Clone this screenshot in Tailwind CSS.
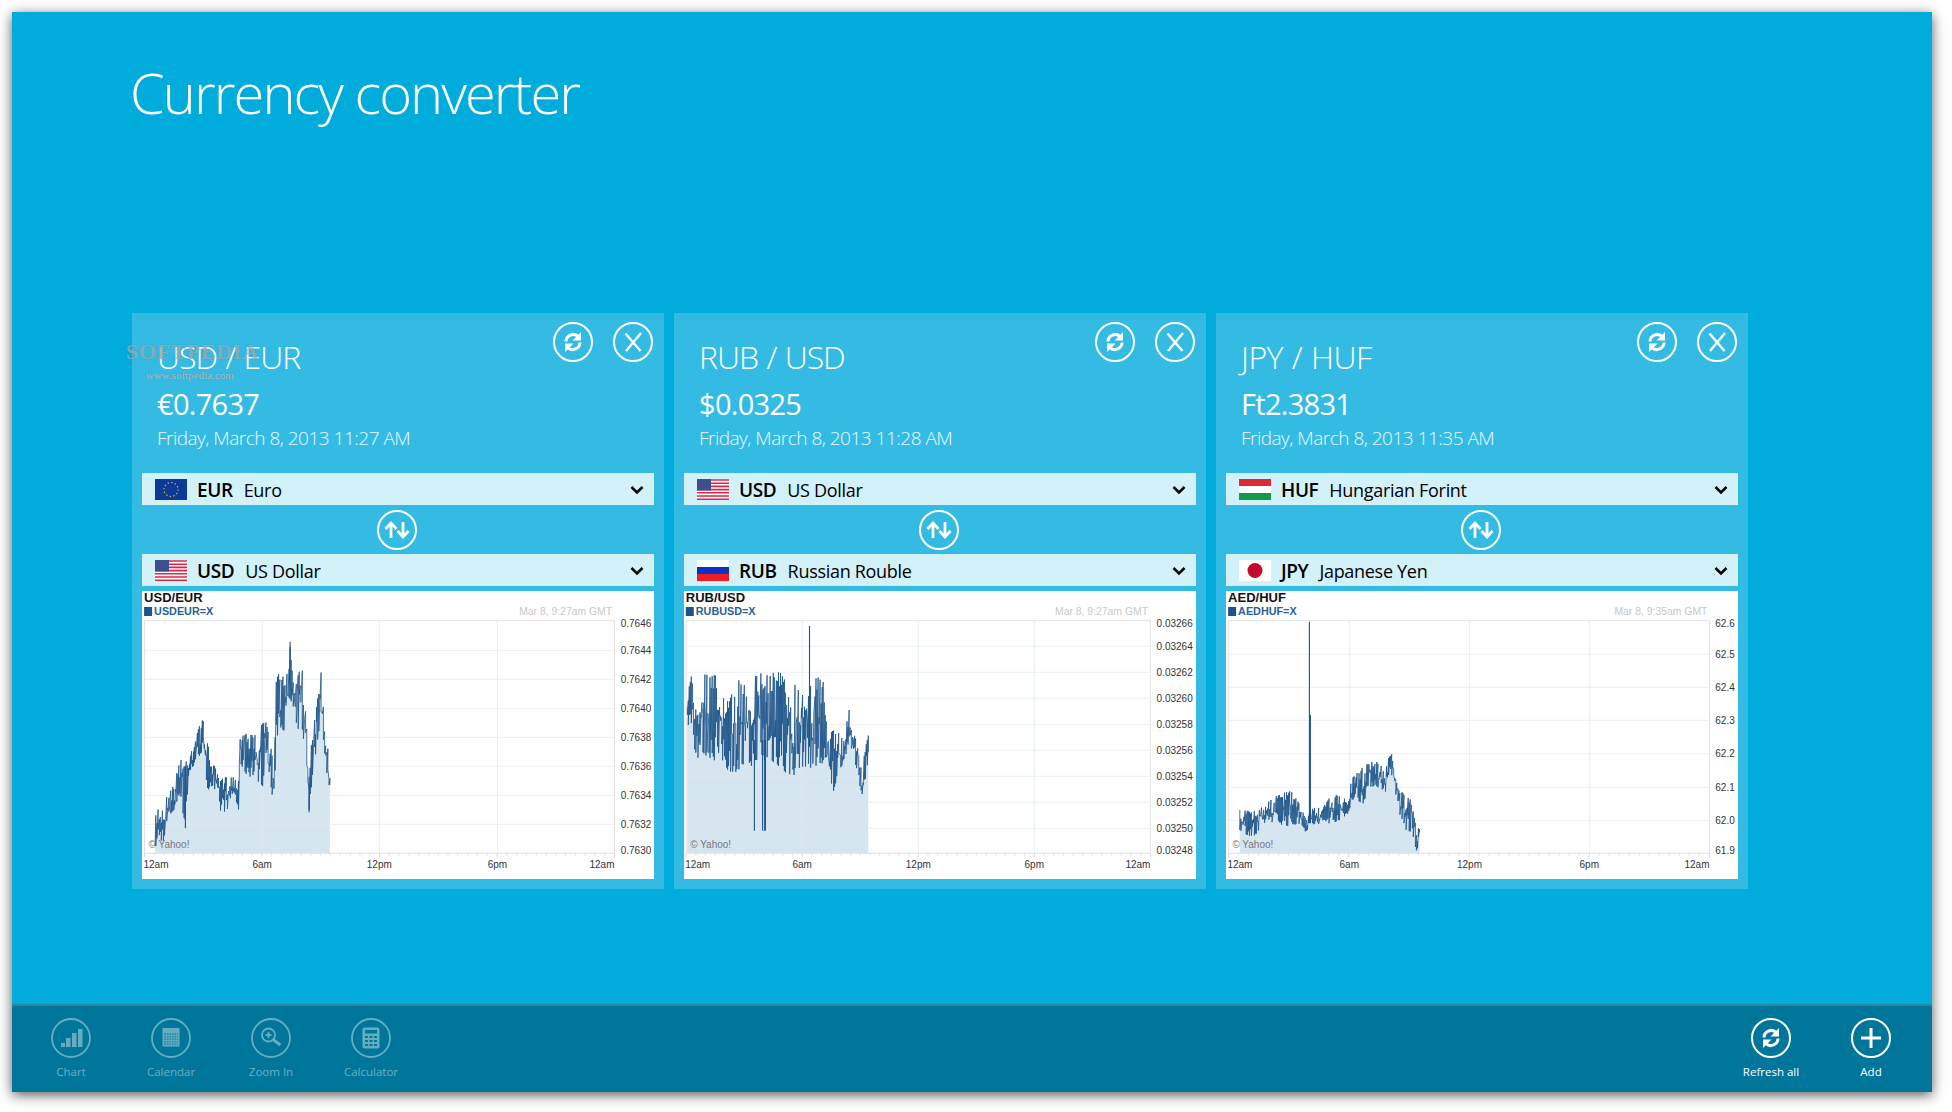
<!DOCTYPE html>
<html lang="en">
<head>
  <meta charset="UTF-8">
  <title>Currency converter</title>
  <script src="https://cdn.jsdelivr.net/npm/@tailwindcss/browser@4"></script>
</head>
<body class="bg-white font-['Open_Sans',sans-serif] text-white">
  <!-- shared icons and flags -->
  <svg class="hidden">
    <symbol id="i-refresh" viewBox="0 0 40 40">
      <path d="M13 19.500a7.200 7.200 0 0 1 12.200-5M27 20.500a7.200 7.200 0 0 1-12.200 5" fill="none" stroke="currentColor" stroke-width="3"/>
      <path d="M28 10v8.500h-8.500zM12 30v-8.500h8.500z" fill="currentColor"/>
    </symbol>
    <symbol id="i-close" viewBox="0 0 40 40">
      <path d="M12.500 11.500 27.500 29M28 11 13 29" fill="none" stroke="currentColor" stroke-width="2.400"/>
    </symbol>
    <symbol id="i-swap" viewBox="0 0 40 40">
      <path d="M14 28V14M8.500 19l5.500-6 5.500 6M26 12v14M20.500 21l5.500 6 5.500-6" fill="none" stroke="currentColor" stroke-width="2.800"/>
    </symbol>
    <symbol id="i-chevron" viewBox="0 0 14 10">
      <path d="M1.500 2 7 7.500 12.500 2" fill="none" stroke="currentColor" stroke-width="2.500"/>
    </symbol>
    <symbol id="f-eu" viewBox="0 0 32 21">
      <rect width="32" height="21" fill="#0c3a96"/>
      <circle cx="16" cy="10.500" r="7" fill="none" stroke="#e8c93a" stroke-width="1.200" stroke-dasharray="1.200 2.470"/>
    </symbol>
    <symbol id="f-us" viewBox="0 0 32 21">
      <rect width="32" height="21" fill="#fff"/>
      <path d="M0 1h32M0 4.200h32M0 7.400h32M0 10.600h32M0 13.800h32M0 17h32M0 20.200h32" stroke="#d8274a" stroke-width="1.600"/>
      <rect width="14" height="11.500" fill="#3d4f8c"/>
    </symbol>
    <symbol id="f-ru" viewBox="0 0 32 21">
      <rect width="32" height="7" fill="#fff"/>
      <rect y="7" width="32" height="7" fill="#0b2fc4"/>
      <rect y="14" width="32" height="7" fill="#ee1c25"/>
    </symbol>
    <symbol id="f-hu" viewBox="0 0 32 21">
      <rect width="32" height="7" fill="#dc2a36"/>
      <rect y="7" width="32" height="7" fill="#fff"/>
      <rect y="14" width="32" height="7" fill="#129a4c"/>
    </symbol>
    <symbol id="f-jp" viewBox="0 0 32 21">
      <rect width="32" height="21" fill="#fff"/>
      <circle cx="16" cy="10.500" r="7.500" fill="#c4092f"/>
    </symbol>
  </svg>

  <div class="w-[1952px] h-[1112px] p-3 overflow-hidden">
    <div class="relative w-[1920px] h-[1080px] bg-[#00acdc] flex flex-col shadow-[0_3px_12px_rgba(0,0,0,0.65)]">
      <header class="h-[301px] pl-[118px] pt-[45px]">
        <h1 class="text-[56px] leading-[70px] font-light tracking-[-1.95px]">Currency converter</h1>
      </header>

      <main class="flex gap-[10px] pl-[120px]">
        <!-- USD / EUR -->
        <section class="w-[532px] h-[576px] bg-[#33bbe3] p-[10px]">
          <div class="h-[150px] flex justify-between">
            <div class="pl-[15px] pt-[14px]">
              <h2 class="text-[32px] leading-[40px] font-light tracking-[-1px] [word-spacing:1px]">USD / EUR</h2>
              <p class="mt-[9px] text-[29px] leading-[36px] tracking-[-0.7px]">€0.7637</p>
              <p class="mt-[2px] text-[19px] leading-[28px] font-light tracking-[-0.5px] text-white/90">Friday, March 8, 2013 11:27 AM</p>
            </div>
            <div class="flex gap-5 pr-px -mt-px h-10">
              <button class="w-10 h-10 rounded-full border-2 border-white"><svg class="w-10 h-10 -m-0.5"><use href="#i-refresh"/></svg></button>
              <button class="w-10 h-10 rounded-full border-2 border-white"><svg class="w-10 h-10 -m-0.5"><use href="#i-close"/></svg></button>
            </div>
          </div>
          <div class="h-8 bg-[#d2f1f8] text-black flex items-center pl-[13px] pr-[10px]">
            <svg class="w-8 h-[21px]"><use href="#f-eu"/></svg>
            <span class="ml-[10px] pt-0.5 text-[19px] font-semibold tracking-[-0.4px]">EUR</span>
            <span class="ml-[11px] pt-0.5 text-[18px] tracking-[-0.3px]">Euro</span>
            <svg class="ml-auto mt-0.5 w-[14px] h-[10px]"><use href="#i-chevron"/></svg>
          </div>
          <div class="h-[49px] flex items-center justify-center">
            <button class="-ml-[3px] w-10 h-10 rounded-full border-2 border-white"><svg class="w-10 h-10 -m-0.5"><use href="#i-swap"/></svg></button>
          </div>
          <div class="h-8 bg-[#d2f1f8] text-black flex items-center pl-[13px] pr-[10px]">
            <svg class="w-8 h-[21px]"><use href="#f-us"/></svg>
            <span class="ml-[10px] pt-0.5 text-[19px] font-semibold tracking-[-0.4px]">USD</span>
            <span class="ml-[11px] pt-0.5 text-[18px] tracking-[-0.3px]">US Dollar</span>
            <svg class="ml-auto mt-0.5 w-[14px] h-[10px]"><use href="#i-chevron"/></svg>
          </div>
          <svg id="chart-0" class="mt-[5px] block w-[512px] h-[288px] bg-white" viewBox="0 0 512 288"></svg>
        </section>

        <!-- RUB / USD -->
        <section class="w-[532px] h-[576px] bg-[#33bbe3] p-[10px]">
          <div class="h-[150px] flex justify-between">
            <div class="pl-[15px] pt-[14px]">
              <h2 class="text-[32px] leading-[40px] font-light tracking-[-1px] [word-spacing:1px]">RUB / USD</h2>
              <p class="mt-[9px] text-[29px] leading-[36px] tracking-[-0.7px]">$0.0325</p>
              <p class="mt-[2px] text-[19px] leading-[28px] font-light tracking-[-0.5px] text-white/90">Friday, March 8, 2013 11:28 AM</p>
            </div>
            <div class="flex gap-5 pr-px -mt-px h-10">
              <button class="w-10 h-10 rounded-full border-2 border-white"><svg class="w-10 h-10 -m-0.5"><use href="#i-refresh"/></svg></button>
              <button class="w-10 h-10 rounded-full border-2 border-white"><svg class="w-10 h-10 -m-0.5"><use href="#i-close"/></svg></button>
            </div>
          </div>
          <div class="h-8 bg-[#d2f1f8] text-black flex items-center pl-[13px] pr-[10px]">
            <svg class="w-8 h-[21px]"><use href="#f-us"/></svg>
            <span class="ml-[10px] pt-0.5 text-[19px] font-semibold tracking-[-0.4px]">USD</span>
            <span class="ml-[11px] pt-0.5 text-[18px] tracking-[-0.3px]">US Dollar</span>
            <svg class="ml-auto mt-0.5 w-[14px] h-[10px]"><use href="#i-chevron"/></svg>
          </div>
          <div class="h-[49px] flex items-center justify-center">
            <button class="-ml-[3px] w-10 h-10 rounded-full border-2 border-white"><svg class="w-10 h-10 -m-0.5"><use href="#i-swap"/></svg></button>
          </div>
          <div class="h-8 bg-[#d2f1f8] text-black flex items-center pl-[13px] pr-[10px]">
            <svg class="w-8 h-[21px]"><use href="#f-ru"/></svg>
            <span class="ml-[10px] pt-0.5 text-[19px] font-semibold tracking-[-0.4px]">RUB</span>
            <span class="ml-[11px] pt-0.5 text-[18px] tracking-[-0.3px]">Russian Rouble</span>
            <svg class="ml-auto mt-0.5 w-[14px] h-[10px]"><use href="#i-chevron"/></svg>
          </div>
          <svg id="chart-1" class="mt-[5px] block w-[512px] h-[288px] bg-white" viewBox="0 0 512 288"></svg>
        </section>

        <!-- JPY / HUF -->
        <section class="w-[532px] h-[576px] bg-[#33bbe3] p-[10px]">
          <div class="h-[150px] flex justify-between">
            <div class="pl-[15px] pt-[14px]">
              <h2 class="text-[32px] leading-[40px] font-light tracking-[-0.5px] [word-spacing:1px]">JPY / HUF</h2>
              <p class="mt-[9px] text-[29px] leading-[36px] tracking-[-0.7px]">Ft2.3831</p>
              <p class="mt-[2px] text-[19px] leading-[28px] font-light tracking-[-0.5px] text-white/90">Friday, March 8, 2013 11:35 AM</p>
            </div>
            <div class="flex gap-5 pr-px -mt-px h-10">
              <button class="w-10 h-10 rounded-full border-2 border-white"><svg class="w-10 h-10 -m-0.5"><use href="#i-refresh"/></svg></button>
              <button class="w-10 h-10 rounded-full border-2 border-white"><svg class="w-10 h-10 -m-0.5"><use href="#i-close"/></svg></button>
            </div>
          </div>
          <div class="h-8 bg-[#d2f1f8] text-black flex items-center pl-[13px] pr-[10px]">
            <svg class="w-8 h-[21px]"><use href="#f-hu"/></svg>
            <span class="ml-[10px] pt-0.5 text-[19px] font-semibold tracking-[-0.4px]">HUF</span>
            <span class="ml-[11px] pt-0.5 text-[18px] tracking-[-0.3px]">Hungarian Forint</span>
            <svg class="ml-auto mt-0.5 w-[14px] h-[10px]"><use href="#i-chevron"/></svg>
          </div>
          <div class="h-[49px] flex items-center justify-center">
            <button class="-ml-[3px] w-10 h-10 rounded-full border-2 border-white"><svg class="w-10 h-10 -m-0.5"><use href="#i-swap"/></svg></button>
          </div>
          <div class="h-8 bg-[#d2f1f8] text-black flex items-center pl-[13px] pr-[10px]">
            <svg class="w-8 h-[21px]"><use href="#f-jp"/></svg>
            <span class="ml-[10px] pt-0.5 text-[19px] font-semibold tracking-[-0.4px]">JPY</span>
            <span class="ml-[11px] pt-0.5 text-[18px] tracking-[-0.3px]">Japanese Yen</span>
            <svg class="ml-auto mt-0.5 w-[14px] h-[10px]"><use href="#i-chevron"/></svg>
          </div>
          <svg id="chart-2" class="mt-[5px] block w-[512px] h-[288px] bg-white" viewBox="0 0 512 288"></svg>
        </section>
      </main>

      <footer class="mt-auto h-[88px] bg-[#00769a] border-t-2 border-[#2a87a8] flex justify-between pl-[9px] pr-[11px] pt-[12px] text-[11.500px]">
        <div class="flex opacity-40">
          <button class="w-[100px] flex flex-col items-center">
            <svg class="w-10 h-10" viewBox="0 0 40 40"><circle cx="20" cy="20" r="19" fill="none" stroke="currentColor" stroke-width="1.800"/><path d="M10 25h4v4h-4zM15 20h4.500v9H15zM21 15h4.500v14H21zM27 11h4.500v18H27z" fill="currentColor"/></svg>
            <span class="mt-[5px]">Chart</span>
          </button>
          <button class="w-[100px] flex flex-col items-center">
            <svg class="w-10 h-10" viewBox="0 0 40 40"><circle cx="20" cy="20" r="19" fill="none" stroke="currentColor" stroke-width="1.800"/><path d="M11.500 10h17v18.500h-17z" fill="currentColor"/><path d="M13 15h14v12H13z" fill="#00769a" fill-opacity=".55"/><path d="M15.500 15v12M18 15v12M20.500 15v12M23 15v12M25.500 15v12M13 17.500h14M13 20h14M13 22.500h14M13 25h14" stroke="currentColor" stroke-width=".8"/></svg>
            <span class="mt-[5px]">Calendar</span>
          </button>
          <button class="w-[100px] flex flex-col items-center">
            <svg class="w-10 h-10" viewBox="0 0 40 40"><circle cx="20" cy="20" r="19" fill="none" stroke="currentColor" stroke-width="1.800"/><circle cx="17.500" cy="17" r="6.500" fill="none" stroke="currentColor" stroke-width="1.800"/><path d="M14.500 17h6M17.500 14v6" stroke="currentColor" stroke-width="1.800"/><path d="M22.500 22l7 5" stroke="currentColor" stroke-width="2.800"/></svg>
            <span class="mt-[5px]">Zoom In</span>
          </button>
          <button class="w-[100px] flex flex-col items-center">
            <svg class="w-10 h-10" viewBox="0 0 40 40"><circle cx="20" cy="20" r="19" fill="none" stroke="currentColor" stroke-width="1.800"/><rect x="11.500" y="9.500" width="17" height="21" rx="2" fill="currentColor"/><path d="M14 12h12v3.500H14z" fill="#00769a"/><path d="M14 18h3v2h-3zM18.500 18h3v2h-3zM23 18h3v2h-3zM14 22h3v2h-3zM18.500 22h3v2h-3zM23 22h3v2h-3zM14 26h3v2h-3zM18.500 26h3v2h-3zM23 26h3v2h-3z" fill="#00769a"/></svg>
            <span class="mt-[5px]">Calculator</span>
          </button>
        </div>
        <div class="flex">
          <button class="w-[100px] flex flex-col items-center">
            <span class="w-10 h-10 rounded-full border-2 border-white"><svg class="w-10 h-10 -m-0.5"><use href="#i-refresh"/></svg></span>
            <span class="mt-[5px]">Refresh all</span>
          </button>
          <button class="w-[100px] flex flex-col items-center">
            <span class="w-10 h-10 rounded-full border-2 border-white flex items-center justify-center"><svg class="w-5 h-5" viewBox="0 0 20 20"><path d="M10 0v20M0 10h20" stroke="currentColor" stroke-width="3"/></svg></span>
            <span class="mt-[5px]">Add</span>
          </button>
        </div>
      </footer>

      <!-- watermark sits over the first card -->
      <div class="absolute left-[114px] top-[328px] font-['Liberation_Serif',serif] font-bold text-[22px] leading-6 tracking-[0.8px] text-white/35 [text-shadow:0_0_1px_rgba(80,100,110,0.7)]">SOFTPEDIA</div>
      <div class="absolute left-[134px] top-[355px] font-['Liberation_Serif',serif] text-[11px] leading-4 text-white/50 [text-shadow:0_0_1px_rgba(80,100,110,0.8)]">www.softpedia.com</div>
    </div>
  </div>

  <script>
    // all numbers below are measured from the crops (zx = x*2.904, zy = y*3)
    const charts = [
      {
        dx: -12, plot: [42, 1407], vgrid: [384, 724, 1067], hgrid: [212, 298, 385, 472, 559, 646, 733],
        title: 'USD/EUR', sym: 'USDEUR=X', stamp: 'Mar 8, 9:27am GMT', stampEnd: 1400, labelX: 1425, symX: 41,
        ylabels: [['0.7646', 128], ['0.7644', 210], ['0.7642', 297], ['0.7640', 384], ['0.7638', 471], ['0.7636', 558], ['0.7634', 645], ['0.7632', 732], ['0.7630', 810]],
        env: [[73, 790, 810], [75, 700, 800], [85, 670, 790], [100, 690, 780], [110, 630, 720], [130, 615, 690], [145, 525, 640], [160, 540, 745], [170, 515, 600], [190, 480, 545], [210, 405, 515], [225, 490, 630], [240, 540, 620], [260, 600, 695], [280, 590, 695], [300, 590, 640], [315, 600, 695], [320, 450, 550], [340, 440, 590], [360, 470, 590], [385, 430, 620], [395, 425, 520], [410, 490, 640], [418, 600, 665], [425, 300, 480], [435, 260, 440], [450, 310, 455], [465, 185, 380], [480, 300, 460], [497, 240, 435], [510, 345, 520], [520, 550, 697], [530, 445, 590], [545, 355, 480], [555, 275, 400], [565, 430, 520], [578, 520, 640], [583, 640, 643]],
        spikes: [[161, 560, 745], [520, 590, 697], [465, 185, 300]]
      },
      {
        dx: -14, plot: [47, 1395], vgrid: [384, 721, 1058], hgrid: [199, 277, 355, 433, 511, 589, 667, 745],
        title: 'RUB/USD', sym: 'RUBUSD=X', stamp: 'Mar 8, 9:27am GMT', stampEnd: 1388, labelX: 1413, symX: 46,
        ylabels: [['0.03266', 128], ['0.03264', 198], ['0.03262', 276], ['0.03260', 354], ['0.03258', 432], ['0.03256', 510], ['0.03254', 588], ['0.03252', 666], ['0.03250', 744], ['0.03248', 810]],
        env: [[50, 355, 435], [65, 265, 435], [75, 310, 545], [90, 275, 520], [110, 285, 530], [135, 285, 545], [150, 350, 540], [170, 365, 575], [197, 300, 575], [225, 305, 565], [245, 295, 560], [255, 275, 530], [270, 270, 560], [285, 268, 540], [318, 273, 560], [335, 300, 585], [360, 310, 585], [385, 330, 560], [405, 280, 560], [415, 280, 570], [445, 305, 565], [460, 465, 590], [475, 450, 640], [490, 460, 570], [505, 480, 550], [520, 385, 480], [530, 450, 520], [545, 490, 590], [558, 585, 647], [570, 470, 580], [579, 465, 515]],
        spikes: [[245, 480, 752], [269, 480, 752], [275, 480, 752], [277, 480, 752], [405, 138, 500]]
      },
      {
        dx: -11, plot: [39, 1436], vgrid: [390, 739, 1087], hgrid: [223, 322, 421, 521, 622, 721],
        title: 'AED/HUF', sym: 'AEDHUF=X', stamp: 'Mar 8, 9:35am GMT', stampEnd: 1430, labelX: 1453, symX: 38,
        ylabels: [['62.6', 128], ['62.5', 221], ['62.4', 321], ['62.3', 420], ['62.2', 519], ['62.1', 621], ['62.0', 720], ['61.9', 810]],
        env: [[72, 680, 750], [100, 695, 770], [120, 690, 770], [150, 670, 720], [175, 650, 730], [220, 630, 740], [250, 680, 730], [265, 720, 760], [275, 690, 730], [295, 680, 740], [310, 690, 730], [340, 640, 730], [385, 660, 710], [398, 595, 660], [430, 560, 670], [450, 540, 620], [470, 545, 620], [495, 570, 635], [510, 510, 570], [525, 570, 650], [540, 630, 720], [555, 650, 750], [570, 660, 760], [585, 745, 815], [597, 740, 780]],
        spikes: [[274, 125, 730], [277, 405, 730]]
      }
    ];

    let seed = 7;
    function rnd() {
      seed = (seed * 16807) % 2147483647;
      return seed / 2147483647;
    }

    const Y = zy => +(zy / 3 - 11).toFixed(1);

    function drawChart(c, i) {
      const X = zx => +(zx / 2.904 + c.dx).toFixed(1);
      const top = Y(122), bottom = Y(820), left = X(c.plot[0]), right = X(c.plot[1]);
      let out = '';

      // series: zigzag between the measured high and low of each column
      const env = c.env;
      let pts = [];
      for (let n = 0; n < env.length - 1; n++) {
        const a = env[n], b = env[n + 1];
        const steps = Math.max(1, Math.round((b[0] - a[0]) / 3));
        for (let s = 0; s < steps; s++) {
          const t = s / steps, zx = a[0] + (b[0] - a[0]) * t;
          const hi = a[1] + (b[1] - a[1]) * t, lo = a[2] + (b[2] - a[2]) * t;
          const r1 = rnd(), r2 = rnd();
          pts.push([X(zx), Y(hi + (lo - hi) * r1 * r1 * 0.7)]);
          pts.push([X(zx), Y(lo - (lo - hi) * r2 * r2 * 0.7)]);
        }
      }
      const line = pts.map((p, n) => (n ? 'L' : 'M') + p[0] + ' ' + p[1]).join('');
      const x0 = pts[0][0], x1 = pts[pts.length - 1][0];
      out += `<path d="${line}L${x1} ${bottom}L${x0} ${bottom}Z" fill="#d6e6f1"/>`;

      // grid goes over the fill, only just visible there
      c.hgrid.forEach(y => out += `<path d="M${left} ${Y(y)}H${right}" stroke="#dfe8f2" stroke-opacity=".7"/>`);
      c.vgrid.forEach(x => out += `<path d="M${X(x)} ${top}V${bottom}" stroke="#dfe8f2" stroke-opacity=".7"/>`);

      out += `<path d="${line}" fill="none" stroke="#1c5389" stroke-width=".8"/>`;
      c.spikes.forEach(s => out += `<path d="M${X(s[0])} ${Y(s[1])}V${Y(s[2])}" stroke="#1c5389" stroke-width="1.100"/>`);

      // frame and ticks
      out += `<path d="M${left} ${bottom}V${top}H${right}V${bottom}H${left}" fill="none" stroke="#e2e2e2"/>`;
      const minor = (right - left) / 48;
      for (let k = 0; k <= 48; k++) {
        const x = +(left + minor * k).toFixed(1), major = k % 12 === 0;
        out += `<path d="M${x} ${bottom}v${major ? 4 : 2}" stroke="#d8d8d8"/>`;
      }

      // header
      out += `<text x="${X(c.symX)}" y="11" font-size="13" font-weight="700" fill="#111">${c.title}</text>`;
      out += `<rect x="${X(c.symX)}" y="16" width="8" height="9" fill="#1c5389"/>`;
      out += `<text x="${X(c.symX) + 10}" y="24" font-size="10.800" font-weight="700" fill="#2a6095">${c.sym}</text>`;
      out += `<text x="${X(c.stampEnd)}" y="24" font-size="10.400" text-anchor="end" fill="#c8c8c8">${c.stamp}</text>`;
      out += `<text x="${left + 4}" y="${Y(792) + 3.5}" font-size="10" fill="#777">© Yahoo!</text>`;

      // axis labels
      c.ylabels.forEach(l => out += `<text x="${X(c.labelX)}" y="${Y(l[1]) + 4}" font-size="10" fill="#333">${l[0]}</text>`);
      const by = Y(852) + 3.5;
      out += `<text x="${left - 1}" y="${by}" font-size="10" fill="#333">12am</text>`;
      out += `<text x="${X(c.vgrid[0])}" y="${by}" font-size="10" text-anchor="middle" fill="#333">6am</text>`;
      out += `<text x="${X(c.vgrid[1])}" y="${by}" font-size="10" text-anchor="middle" fill="#333">12pm</text>`;
      out += `<text x="${X(c.vgrid[2])}" y="${by}" font-size="10" text-anchor="middle" fill="#333">6pm</text>`;
      out += `<text x="${right}" y="${by}" font-size="10" text-anchor="end" fill="#333">12am</text>`;

      const svg = document.getElementById('chart-' + i);
      svg.setAttribute('font-family', 'Liberation Sans, Arial, sans-serif');
      svg.innerHTML = out;
    }

    charts.forEach(drawChart);
  </script>
</body>
</html>
